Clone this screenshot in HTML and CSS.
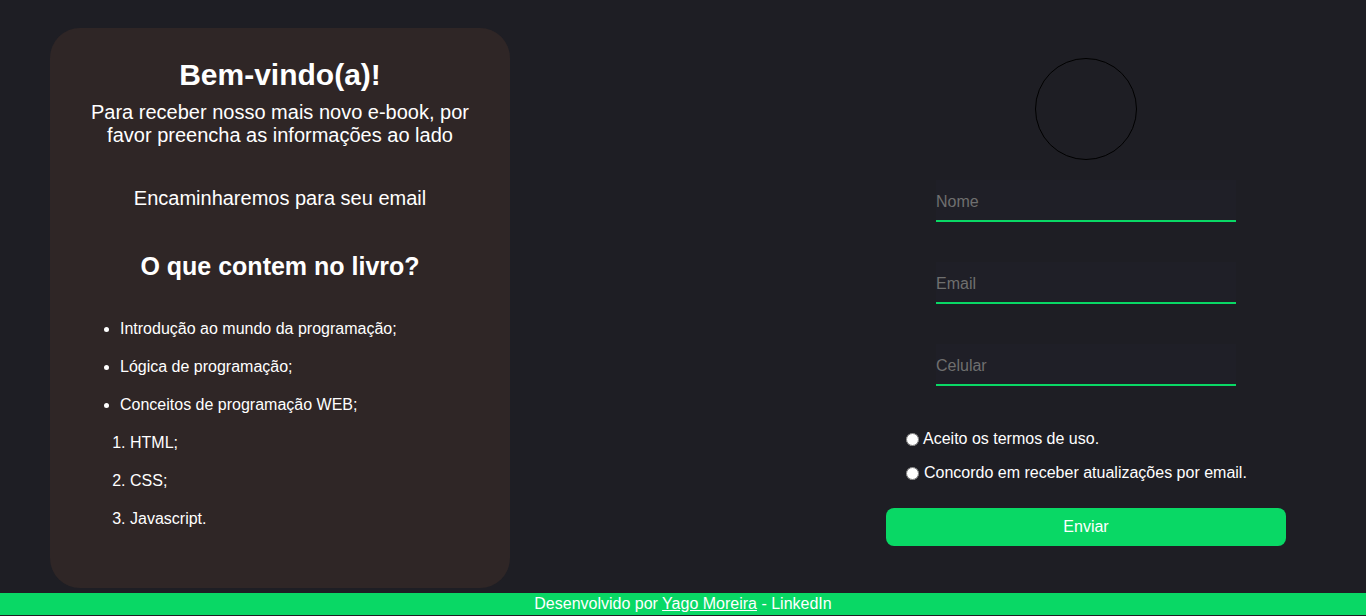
FILE: index.html
```html
<!DOCTYPE html>
<html lang="pt-BR">
<head>
<meta charset="UTF-8">
<title>E-book</title>
<link rel="stylesheet" href="styles.css">
</head>
<body>
<main class="page">
  <section class="card">
    <h1 class="title">Bem-vindo(a)!</h1>
    <p class="lead">Para receber nosso mais novo e-book, por favor preencha as informações ao lado</p>
    <p class="lead lead-gap">Encaminharemos para seu email</p>
    <h2 class="subtitle">O que contem no livro?</h2>
    <ul class="topics">
      <li>Introdução ao mundo da programação;</li>
      <li>Lógica de programação;</li>
      <li>Conceitos de programação WEB;</li>
    </ul>
    <ol class="techs">
      <li>HTML;</li>
      <li>CSS;</li>
      <li>Javascript.</li>
    </ol>
  </section>
  <form class="form">
    <div class="avatar"></div>
    <input class="field" type="text" placeholder="Nome">
    <input class="field" type="email" placeholder="Email">
    <input class="field" type="tel" placeholder="Celular">
    <label class="check check-first"><input type="radio" class="radio">Aceito os termos de uso.</label>
    <label class="check check-second"><input type="radio" class="radio">Concordo em receber atualizações por email.</label>
    <button class="send" type="button">Enviar</button>
  </form>
</main>
<footer class="footer">Desenvolvido por <a class="footer-link" href="#">Yago Moreira</a> - LinkedIn</footer>
</body>
</html>
```
FILE: styles.css
```css
* { box-sizing: border-box; }
html, body { margin: 0; padding: 0; }
body {
  background: #1e1e24;
  color: #ffffff;
  font-family: "Liberation Sans", Arial, sans-serif;
  font-size: 16px;
}
.page {
  height: 593px;
  display: flex;
  justify-content: space-between;
  align-items: flex-start;
  padding: 28px 80px 0 50px;
}
.card {
  width: 460px;
  height: 560px;
  background: #2f2626;
  border-radius: 30px;
  padding: 30px 40px 0;
  text-align: center;
}
.title {
  margin: 0 0 9px;
  font-size: 30px;
  line-height: 34px;
  font-weight: bold;
}
.lead {
  margin: 0;
  font-size: 20px;
  line-height: 23px;
}
.lead-gap { margin-top: 40px; }
.subtitle {
  margin: 42px 0 0;
  font-size: 25px;
  line-height: 28px;
  font-weight: bold;
}
.topics, .techs {
  text-align: left;
  margin: 0;
  font-size: 16px;
}
.topics { margin-top: 40px; padding-left: 30px; }
.techs { padding-left: 40px; }
.topics li, .techs li {
  line-height: 18px;
  margin-bottom: 20px;
}
.form {
  width: 400px;
  padding-top: 30px;
  display: flex;
  flex-direction: column;
  align-items: center;
}
.avatar {
  width: 102px;
  height: 102px;
  border: 1px solid #000000;
  border-radius: 50%;
  margin-bottom: 20px;
}
.field {
  width: 300px;
  height: 42px;
  margin: 0 0 40px;
  padding: 3px 0 0;
  border: none;
  border-bottom: 2px solid #09d865;
  background: #1f1f27;
  color: #ffffff;
  font-family: inherit;
  font-size: 16px;
  outline: none;
}
.field:last-of-type { margin-bottom: 0; }
.field::placeholder { color: #6f6f6f; }
.check {
  align-self: stretch;
  display: flex;
  align-items: center;
  padding-left: 20px;
  line-height: 18px;
  height: 18px;
  font-size: 16px;
  margin-top: 16px;
}
.check-first { margin-top: 44px; }
.radio {
  width: 13px;
  height: 13px;
  margin: 0 4px 0 0;
}
.check-second .radio { margin-right: 5px; }
.send {
  align-self: stretch;
  margin-top: 26px;
  height: 38px;
  border: none;
  border-radius: 8px;
  background: #09d865;
  color: #ffffff;
  font-family: inherit;
  font-size: 16px;
}
.footer {
  height: 22px;
  line-height: 22px;
  background: #09d865;
  text-align: center;
  font-size: 16px;
}
.footer-link { color: #ffffff; text-decoration: underline; }
```
